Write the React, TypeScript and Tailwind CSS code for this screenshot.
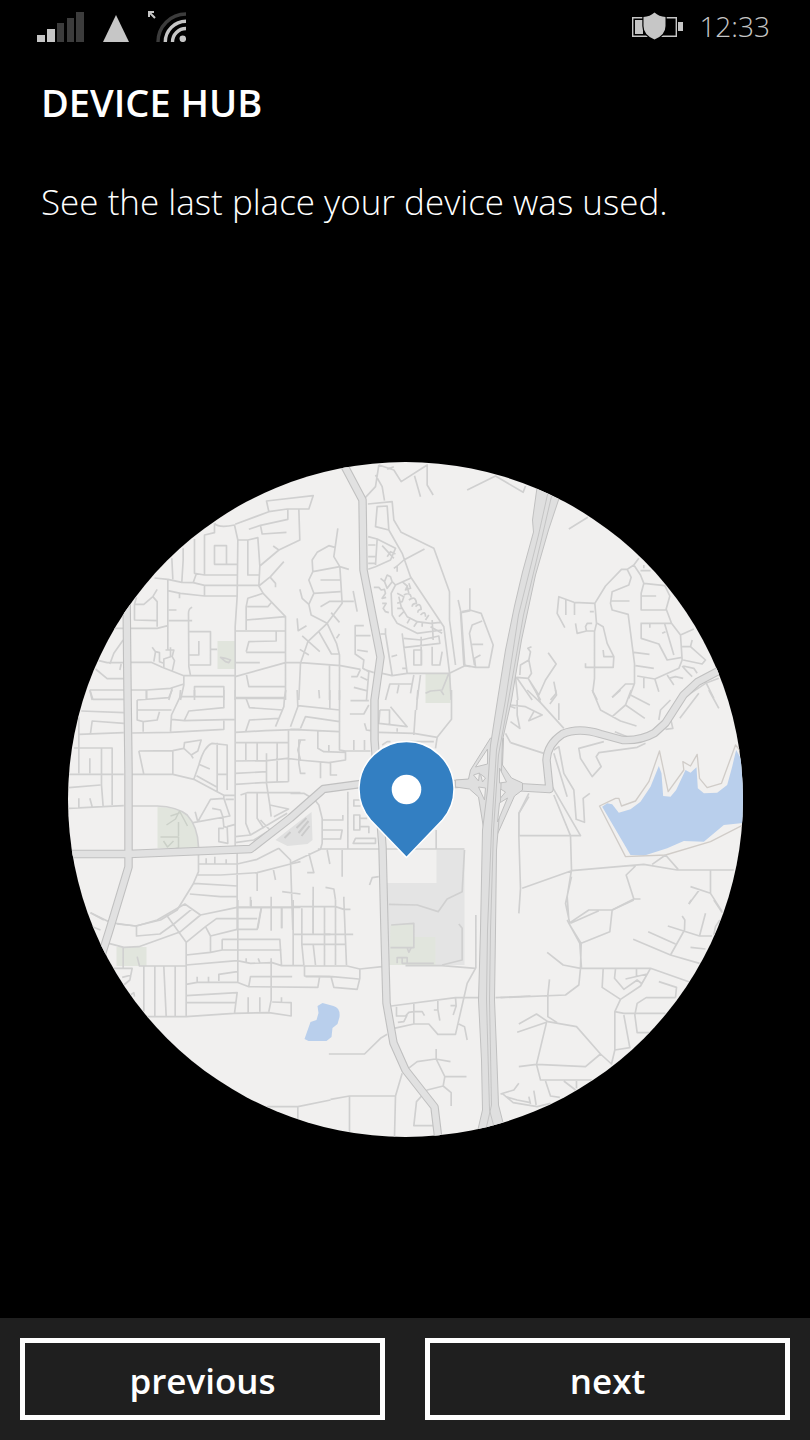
import React from "react";

interface Tile {
  x: number;
  y: number;
  d: string;
}

// Minor streets, one entry per map tile. Tiles are drawn at three units per pixel.
const streets: Tile[] = [
  {
    x: 60,
    y: 460,
    d: "M462 190V218L432 225V345M462 190Q475 205 522 195L532 240L530 410L524 500V720M462 257H498V313H462ZM498 313H530M402 237V340L432 345H530M408 340L398 368M368 265V300L364 365M334 295L337 358M282 354L322 358L364 367L398 368L432 376H595M432 376V408M322 392L360 400L432 408H528M357 400V415M322 358V570M325 450H348M325 482H395M395 442Q384 446 384 460L385 620L390 646M290 388L277 410L250 433H222M277 410L290 425V500M228 412L222 433V480L290 482M160 505H190M210 505H290L322 497M188 540L160 580L148 612M182 612L178 630M115 602L140 608H190M210 607H272L305 622L370 647H524M105 627L140 656H190M275 562L285 575L280 605M285 575L297 578V605L310 610M330 562V590L310 597V625M315 570H340L335 590L342 602L335 635M385 515H450V615H388M415 543V585H385M450 568H470M88 690H190M210 690H258L330 685L370 672M258 690V720M335 685L325 720M370 647V675L360 720M402 720V680H490V720M88 690L95 720M480 592L495 605L505 608L510 600L495 595Z",
  },
  {
    x: 230,
    y: 460,
    d: "M14 193L115 155L170 147H235L248 107L108 123L115 155M55 208L90 196L172 178V148M205 148L208 240L145 270L88 318M90 196L95 222L168 217M22 240H52L82 233L88 318L85 378L98 400L165 470V720M128 258L145 270M52 240V345H88M160 305L120 350L85 378M120 353L135 370V382M98 400L52 415L47 440V510M50 440H112L122 428M47 480L165 470M14 513H165M137 515V543L55 545L47 575M47 577H165M14 608H88M14 650L165 608H210L330 617L390 628M47 640L55 680H165M14 715H165M322 205L310 290L328 320L335 430L290 490L242 465L235 433L250 400L235 360L247 335L328 320L355 328M247 335L245 300L260 277L295 257L313 262M270 360H333M250 400L330 395M235 433L215 415L208 388M270 440L298 424H370M368 393L380 455M302 458L327 487M290 490L232 545L210 610L205 720M265 515L303 582H327M290 490L318 550L327 585V720M318 535L327 522M215 528L268 575M208 568L235 585M200 475L203 512L228 497M297 617V720M400 497H374V582L400 600L397 625L415 635L408 720M374 527H420M380 570L412 575M390 628L380 650H362M390 650L410 660M370 682L408 692M400 628L430 638M445 15L435 80L405 112M445 15L490 30L512 65L590 15V75L608 105M552 47L570 110M470 28L490 20M435 45L455 80L462 122M412 132L485 125L490 180L512 217L610 265L657 395V480L675 615M440 140L470 138L475 210L435 200ZM475 210L515 280L540 350L640 500L657 638L662 720M413 230L440 237L435 315M413 255H435M413 290H435M413 310H435M440 237L495 265L480 300L435 320L413 328M455 257L490 295M470 290L480 275L495 282M582 267L520 300L500 318V335M500 318L490 325M540 355L495 375L482 400L485 465L500 490L560 520L635 510M470 345L462 365L470 385L485 365L480 350ZM485 365L495 375M450 355L462 365M430 382H445L452 390L462 388L465 400L455 415L467 412M455 430H467L458 445L465 455L475 458M515 365L530 378L525 390L540 385L535 370M530 378L535 400M520 405Q540 395 542 412M535 420Q555 405 558 430Q545 430 545 440M555 440Q570 425 572 448Q560 450 563 458M570 465Q585 450 585 470M585 480L595 465M505 410L512 440L530 470L560 485L600 490L630 487M500 400L520 410L515 425L500 430M500 445H515M505 470L520 455M530 490L540 472M550 500L560 485M575 500V488M450 522H465L485 645M465 505V525M515 520L530 640M520 535L572 540L625 528L628 550L518 563M605 480L608 540M600 500L635 520M550 570H573V615H550ZM605 560V615H628L635 575M572 530V615M483 590L500 585M455 640L485 647L530 640H657L703 617L720 620M515 625H530M683 420L692 460L703 617M692 458L720 452M465 720L478 672H545L550 645M505 675L500 700M545 672L540 700M570 645L560 720M585 700L600 693L635 690L655 640M630 690L640 705",
  },
  {
    x: 460,
    y: 460,
    d: "M20 90L105 48L188 97L195 78M325 207L382 172M28 385V450L5 455M0 455L10 615L45 622H85L98 555L62 460L28 450M65 483L35 495L27 520L42 615M35 553H68M45 620L42 595L60 585M178 645L180 615L205 600L210 575L202 565L213 560M205 600L213 640L203 655L168 652M263 578L287 612L255 660L235 705L203 655M280 665L287 700L270 720M168 652L215 720M165 650L172 720M203 655L240 720M535 295L520 315L500 328L512 352L505 375L455 395L450 430L455 450L503 463L522 610V670L505 715M500 328H483L435 378L403 430L408 490L402 515V655L397 695L410 720M403 430L340 427L295 410L290 460L313 503M316 420V465M342 427V465M388 455H400M453 423H507M345 490L350 520L378 513H400M378 513L375 500L380 490H395M410 490L428 500L440 550L460 590L458 622H375V610M428 570L430 590H460M520 315L540 345L550 370L613 377L628 408L617 447L633 490L660 525L665 600L655 625L583 657L530 648M540 332H570M550 325V315M550 370L542 400V450H617M542 408H587M540 490H633M542 490V535L595 552L620 600L665 592M568 490V503M612 490L640 585M605 520L615 515M660 525L700 507M665 560H690L735 600L725 612L668 600M695 540L690 560M520 577L567 583M525 617L580 625M522 672H495L455 712M550 650V685M583 657L595 695M620 645L640 675M625 655L645 650L668 655M665 618L680 635L695 650M668 618L700 625L710 640M775 655L735 670L690 700L665 720M735 665L760 715",
  },
  {
    x: 60,
    y: 690,
    d: "M88 0L97 28H190M258 0V28M230 30L325 23L335 0M360 0L358 22L333 75L330 125M402 0V20M358 20H490M230 30V90L248 95L290 90L297 65M230 60H333M248 95V125M490 0V53L385 63L372 90M333 88L372 92L524 88M490 90V118L330 127L215 129M62 63L190 68M190 100L95 93L90 130M55 133L190 128M55 80V250M40 174H155V345M123 174V285L128 350M88 205V250M25 253H190M25 293L120 285M55 325V353M88 325L95 350M25 355L128 350L190 347M235 183L250 253M235 183L337 182L370 175L372 158L422 150L412 183L392 195L370 175M392 195L398 205M337 182V252M215 253H337L400 268L470 305L490 316H524M400 268L415 225Q430 170 455 160L500 165V300M470 158V305M470 253H500M415 223L448 237M408 257L470 292M215 348H290Q350 350 380 375Q412 410 414 470V545L398 582L350 660L300 690L225 708L165 700M90 668L130 690M404 365L412 395L450 328L490 325V316M398 398L508 378L490 325M455 355L480 360L487 380L490 410L500 412L502 460L475 455V415H490M495 328H520M500 410L524 403M524 0V490M415 522H530M437 505V522M463 500V522M497 508V522M530 490V720M524 23H672L676 0M556 23L567 53L667 60M672 23L670 50L645 110M556 123L567 90L655 85M524 127L615 122L720 118M684 118V275M524 158H684M556 158V210M590 158V210M650 158V275M524 213L620 212L680 205L720 210M524 250L618 245M524 283L618 277L684 275M618 190V280L628 345L684 357L640 380M540 315L560 308H720M556 310V400L570 435M590 310V385L610 415M600 390L628 420M628 345L632 380M524 440L570 435L680 370M524 458L580 450L620 425M412 555H480L590 548L690 522L720 515M400 580L530 588M388 612L480 620H530M530 522L590 508L655 475M590 548V603M638 535L645 570M655 475L690 510L697 720M665 605L720 612M570 620V648M530 652H720M632 620V655M603 652L592 715M664 655V715M720 150L712 180L720 210",
  },
  {
    x: 290,
    y: 690,
    d: "M20 0L22 50L0 110M22 47L147 60M30 115L45 80L147 95M147 0V180L165 183H240M0 118L145 125M82 120V175L100 185L165 187V210L115 218L25 210M45 150H25V220L30 250H45M90 215V265M120 220V255H140M115 165V185M180 32H235M178 72H220L235 45M222 100L228 120L240 122M190 150V180M222 150V180M85 0L87 25M118 0V55M268 60H297V102M268 60L265 100L350 110L300 50M375 60L370 135M265 127L370 130L440 142L483 88V0M440 142L435 175M382 0L378 60M320 115V125M275 165L290 155H300M360 155H430M65 320L85 345L95 385V460L90 478L0 520M95 390H157V375M172 305V475M95 420H155L150 447H95M82 477H522M190 375H208V420H190ZM210 330H190V348H210M188 460L195 445H255V460ZM208 385H230M208 410H235V430M437 420V477M110 480L118 522M155 480V560M55 490L70 548H50M105 592L130 597L135 630M68 590V630M160 620V630M237 585L245 563L265 560M295 643L380 645L443 665L470 627L515 605L522 480M645 130L660 158M715 320L685 370V437M665 0L650 45L675 55M0 310H40L65 325",
  },
  {
    x: 510,
    y: 690,
    d: "M245 0L270 60L330 93L378 108M305 80L345 45L362 0M345 45L403 85M360 15L418 45M305 22L330 0M565 10L508 85M595 0L625 55M445 90L450 60L480 30M480 85L487 115L465 118M50 0L90 38L160 115M75 0L90 38M135 0L138 15L118 42M145 40V90M0 45L45 50L95 75L55 92L70 65M20 30V75L28 115L0 95M0 158L100 190M130 180L145 170L160 250L190 300L197 388L222 397L218 325L238 310M130 190L170 320M125 290L210 437H25M130 315L180 437L183 540L170 620L175 690M183 560L165 640L178 700M280 155L205 175L210 205L245 260L272 230L257 200L265 188L380 172L405 160M55 310L25 370V437L30 595L25 670M35 595L183 542L400 523L500 540H670M465 495L503 538M465 495L425 523M375 528L347 555L370 627H390M370 627L305 660M600 542V610L635 665M540 590L600 610M568 598L535 642M313 125L350 140",
  },
  {
    x: 90,
    y: 900,
    d: "M0 38L55 65M0 78L30 90M80 72L138 78V108L208 102L250 72L303 28M138 78L200 60L283 12L330 45L440 22H608M228 45L287 127V348M330 45L270 95L145 140L100 142L55 130M287 127L345 80L378 56H500M345 80L360 108V155M360 108L440 88H500L512 25M442 0V245M482 0V20M542 25V92M573 20V85M608 0V198M634 25V133L640 195M668 0V103M608 103H720M395 118H568L573 195M395 118V150H573M287 165L360 157L395 150M287 195L440 182L480 190L545 188L573 197H640M467 175V188M503 175L508 188M542 175V300L535 335M70 205H125L118 240L100 255M95 232L123 225M98 142V205M145 198H287M140 170L147 198M160 200V335M193 200V350M220 200L227 348M254 200V348M170 350H287L430 340L535 338L602 348V308L545 306M120 285L130 278L132 290M287 253L320 247H440L475 260L682 262L687 232M320 230V247M354 230V245M385 243V223L440 215M475 258L480 230H605M287 287L440 278L432 340M287 308H435M473 292V338M508 292V335M573 292V305M642 197V228L720 230M530 620H622L720 600M622 620V658",
  },
  {
    x: 290,
    y: 900,
    d: "M8 20H135L160 28H180M160 0L168 195M135 0V195M102 20V198M68 0V100M100 103H188M34 133H168M68 133L75 195M40 198H170L208 207L275 200M208 207V235L200 268L130 262L122 232M45 230H125L205 237M115 462H222L270 415L290 403M310 385L370 372H415L442 403H495L530 250L555 205L455 197H345M302 318L495 293H570M505 372L522 380L530 420M318 320V348H345L355 337L370 335H395L402 347M322 367L340 365L350 345M370 308V370M442 303V328L448 362M430 330H442M495 293L497 318L488 345M480 317H497M350 508L380 485L435 477L480 485M437 447V477L463 530H528M463 530L458 558L410 570L378 605L370 677H432M458 558L482 578V618M120 598L177 588H315L312 710M315 588L335 520M177 588V695M556 45V205M615 293L720 288M505 72L515 85V180L455 195M302 75L370 70V143H300M350 143L355 157L362 143M320 190V173H350V190M335 175V190H430",
  },
  {
    x: 500,
    y: 900,
    d: "M205 70L242 130L240 205M200 60L238 130L243 205M205 70L265 30H335L328 95L242 130M210 70L295 32M335 30L400 0M140 157L188 195L240 205H450L565 245M240 205L235 255L195 285L0 293M147 238L142 285V350L170 368M55 372L108 342L142 365L228 380L300 462L255 500L108 493L55 500M50 397L138 367L108 493L120 540H275M300 462L333 492L343 450L388 443L370 345M343 450V335L360 298L420 258L450 205M343 335L370 340H495M308 207L305 262L360 298M345 207L342 235L370 268L410 240L425 252M375 237L440 222M408 207V232M525 293H437L410 310L403 345L410 398H447M525 293L528 262L475 245M398 118L510 165L597 190M443 95L525 132M510 165L552 90L553 60L545 48M502 78L597 108H635M597 108L615 40M570 142L615 147M640 0L665 38M640 105L645 80L658 60M565 12L572 0M135 543L150 588L178 592M190 543L225 570M228 543V565M0 582L40 570L55 550M5 580L38 608L110 620L150 610M15 590L50 600L90 608M100 572L107 615M85 590L90 612",
  },
];

const arterials = [
  "M126 590L127 690L128 770V867L109 930L98 965",
  "M60 854H128L250 849L290 818L323 789L360 784H455L472 783",
  "M340 458L344 466L362 500L363 570L380 657L374 700V740L382 847L384 930L386 1003L393 1043L405 1070L434 1107L438 1140",
  "M722 670L716 672L697 682L683 695L665 723L654 733Q640 741 622 740L600 734Q578 727 562 734Q547 744 546 760L549 789L515 787",
];

const SignalIcon = () => (
  <svg viewBox="0 0 47 30" className="h-[30px] w-[47px]" aria-label="Signal strength">
    <path d="M0 23h8v7H0zM10 17h8v13h-8z" fill="#c6c6c6" />
    <path d="M20 11h7v19h-7zM30 6h7v24h-7zM39 0h8v30h-8z" fill="#3c3c3c" />
  </svg>
);

const DataIcon = () => (
  <svg viewBox="0 0 26 27" className="h-[27px] w-[26px]" aria-label="Mobile data">
    <path d="M13 0L26 27H0z" fill="#c6c6c6" />
  </svg>
);

const WifiIcon = () => (
  <svg viewBox="0 0 38 31" className="h-[31px] w-[38px]" aria-label="Wi-Fi">
    <path d="M0 1h6M1 0v6M1 1l6 6" stroke="#c6c6c6" strokeWidth="2" fill="none" />
    <path d="M10 31A28 28 0 0 1 38 3" stroke="#3c3c3c" strokeWidth="3.4" fill="none" />
    <path
      d="M17.3 31A20.7 20.7 0 0 1 38 10.3M24.5 31A13.5 13.5 0 0 1 38 17.5"
      stroke="#c6c6c6"
      strokeWidth="3.4"
      fill="none"
    />
    <circle cx="34.8" cy="27.8" r="3.3" fill="#c6c6c6" />
  </svg>
);

const BatteryIcon = () => (
  <svg viewBox="0 0 51 28" className="h-7 w-[51px]" aria-label="Battery saver">
    <path d="M.7 5.7h43.6v18.6H.7z" fill="none" stroke="#c6c6c6" strokeWidth="1.4" />
    <path d="M3 8h8v14H3zM46 10h5v9h-5z" fill="#c6c6c6" />
    <path
      d="M22.5.5Q27 4.5 33.5 5V14Q33.5 23 22.5 27.5Q11.5 23 11.5 14V5Q18 4.5 22.5.5z"
      fill="#c6c6c6"
      stroke="#000"
      strokeWidth="2.4"
      paintOrder="stroke"
    />
  </svg>
);

const DeviceMap = () => (
  <svg
    viewBox="67.5 462 675 675"
    className="aspect-square w-5/6"
    role="img"
    aria-label="Map of the last known location"
  >
    <defs>
      <clipPath id="disc">
        <circle cx="405" cy="799.5" r="337.5" />
      </clipPath>
    </defs>
    <g clipPath="url(#disc)" strokeLinejoin="round">
      <rect x="67" y="462" width="677" height="676" fill="#f1f0ef" />

      {/* parks and grounds */}
      <path d="M436 850h28v115h-76l-2-82h50z" fill="#e4e4e4" />
      <g fill="#e1e5dd">
        <path d="M217 641h18v28h-18zM425 674h25v29h-25zM116 947h30v19h-30z" />
        <path d="M157 807Q177 807 187 815Q197 827 198 848H157z" />
        <path d="M390 925l23-2v14h22v28h-46z" />
      </g>
      <path d="M275 840l36-28 1 28-5 4-20 2z" fill="#e0e0e0" />
      <path
        d="M296 828l10-10M298 833l10-12M301 836l8-10M284 838l6-6"
        stroke="#cacaca"
        strokeWidth="2"
      />

      {/* water */}
      <g fill="#b9cfec">
        <path d="M317 1006l5-3 11 3q7 2 6 11l-2 7-5 4-1 9-5 4h-18l-4-2 6-17 6-2 2-7z" />
        <path
          transform="translate(510 690) scale(.33333)"
          d="M275 350L290 340L305 343L325 368L360 358L390 335L420 290L445 228L453 250L458 318L480 320L497 300L525 240L540 248L558 232L562 295L580 310L620 308L650 285L665 230L677 180L705 230V398L640 405L580 455L520 453L470 475L400 497L360 495Z"
        />
      </g>
      <path
        transform="translate(510 690) scale(.33333)"
        d="M700 404L600 455L465 495L345 500L267 348L315 325H325L333 348L375 333L415 275L447 183L473 305L520 240L517 215L540 228L560 193L567 265L590 293L633 280L675 165L700 195"
        fill="none"
        stroke="#d0ccc8"
        strokeWidth="4"
      />

      {streets.map((tile) => (
        <path
          key={`${tile.x}-${tile.y}`}
          transform={`translate(${tile.x} ${tile.y}) scale(.33333)`}
          d={tile.d}
          fill="none"
          stroke="#d0d0d0"
          strokeWidth="5"
        />
      ))}
      <path
        d="M166 825l9-6 4-8 8 15M179 813l-9 3M160 837h18v11l-5 1M163 841l4 6 6-6M178 822v14"
        fill="none"
        stroke="#cbd0c8"
        strokeWidth="1.5"
      />

      {/* arterial roads: casing first, then the surface */}
      {arterials.map((d) => (
        <path key={d} d={d} fill="none" stroke="#c0c0c0" strokeWidth="8.5" />
      ))}
      {arterials.map((d) => (
        <path key={d} d={d} fill="none" stroke="#e1e1e1" strokeWidth="6.3" />
      ))}

      {/* interchange ramps */}
      <path
        d="M490 738L470 770L468 779L455 780V787L469 789L478 797L484 834L497 834L514 796L522 790V783L511 778L502 765L503 738z"
        fill="#dfdfdf"
        stroke="#bebebe"
      />

      {/* freeway */}
      <path
        d="M537 484L532 520L533 532L522 572L514 606L505 650L497 700L490 745L487 790L482 830L480 930L478 1000L481 1060L482 1110L475 1140H507L498 1105L496 1050L494 1000L495 930L496 850L500 800L502 740L511 700L521 640L535 575L548 530L560 494z"
        fill="#dfdfdf"
        stroke="#c0c0c0"
      />
      <path
        d="M548 490L538 535L518 615L505 700L496 750L491 830L487 930L486 1000L489 1110L497 1140M552 492L542 535L523 615L508 700L498 755L493 830L490 930L489 1000L491 1105L483 1140"
        fill="none"
        stroke="#c4c4c4"
      />
      <path
        d="M487 749l-12 18 12-3zM473 775l6-2-1 8zM480 774l5 4-3 4zM478 787l7 1-1 12zM499 768l7 14-7 1zM500 789l5 3-5 6zM499 803l8-5-10 24z"
        fill="#f1f0ef"
        stroke="#c0c0c0"
      />
    </g>

    {/* location pin */}
    <path
      d="M406 857.5L370 820A47.5 47.5 0 1 1 442 820z"
      fill="#337fc2"
      stroke="#fff"
      strokeWidth="1.5"
    />
    <circle cx="406" cy="789.5" r="14.8" fill="#fff" />
  </svg>
);

const NavButton = ({ label }: { label: string }) => (
  <button
    type="button"
    className="h-[82px] flex-1 border-[5px] border-white pt-1 text-[35px] font-semibold"
  >
    {label}
  </button>
);

const App = () => {
  return (
    <div className="flex min-h-screen flex-col bg-black font-['Open_Sans','Noto_Sans',sans-serif] text-white">
      <header className="flex h-14 items-center justify-between pr-10 pb-1 pl-[37px] text-[#c6c6c6]">
        <div className="flex items-end gap-[19px]">
          <SignalIcon />
          <DataIcon />
          <WifiIcon />
        </div>
        <div className="flex items-center gap-4">
          <BatteryIcon />
          <time className="text-[28px] font-[350]">12:33</time>
        </div>
      </header>

      <main className="flex flex-1 flex-col">
        <div className="h-[225px] px-[41px] pt-5">
          <h1 className="text-[38px] leading-[52px] font-semibold">DEVICE HUB</h1>
          <p className="mt-12 text-[35px] leading-[52px] font-[350]">
            See the last place your device was used.
          </p>
        </div>
        <div className="flex flex-1 items-center justify-center">
          <DeviceMap />
        </div>
      </main>

      <footer className="flex gap-10 bg-[#1f1f1f] p-5">
        <NavButton label="previous" />
        <NavButton label="next" />
      </footer>
    </div>
  );
};

export default App;
